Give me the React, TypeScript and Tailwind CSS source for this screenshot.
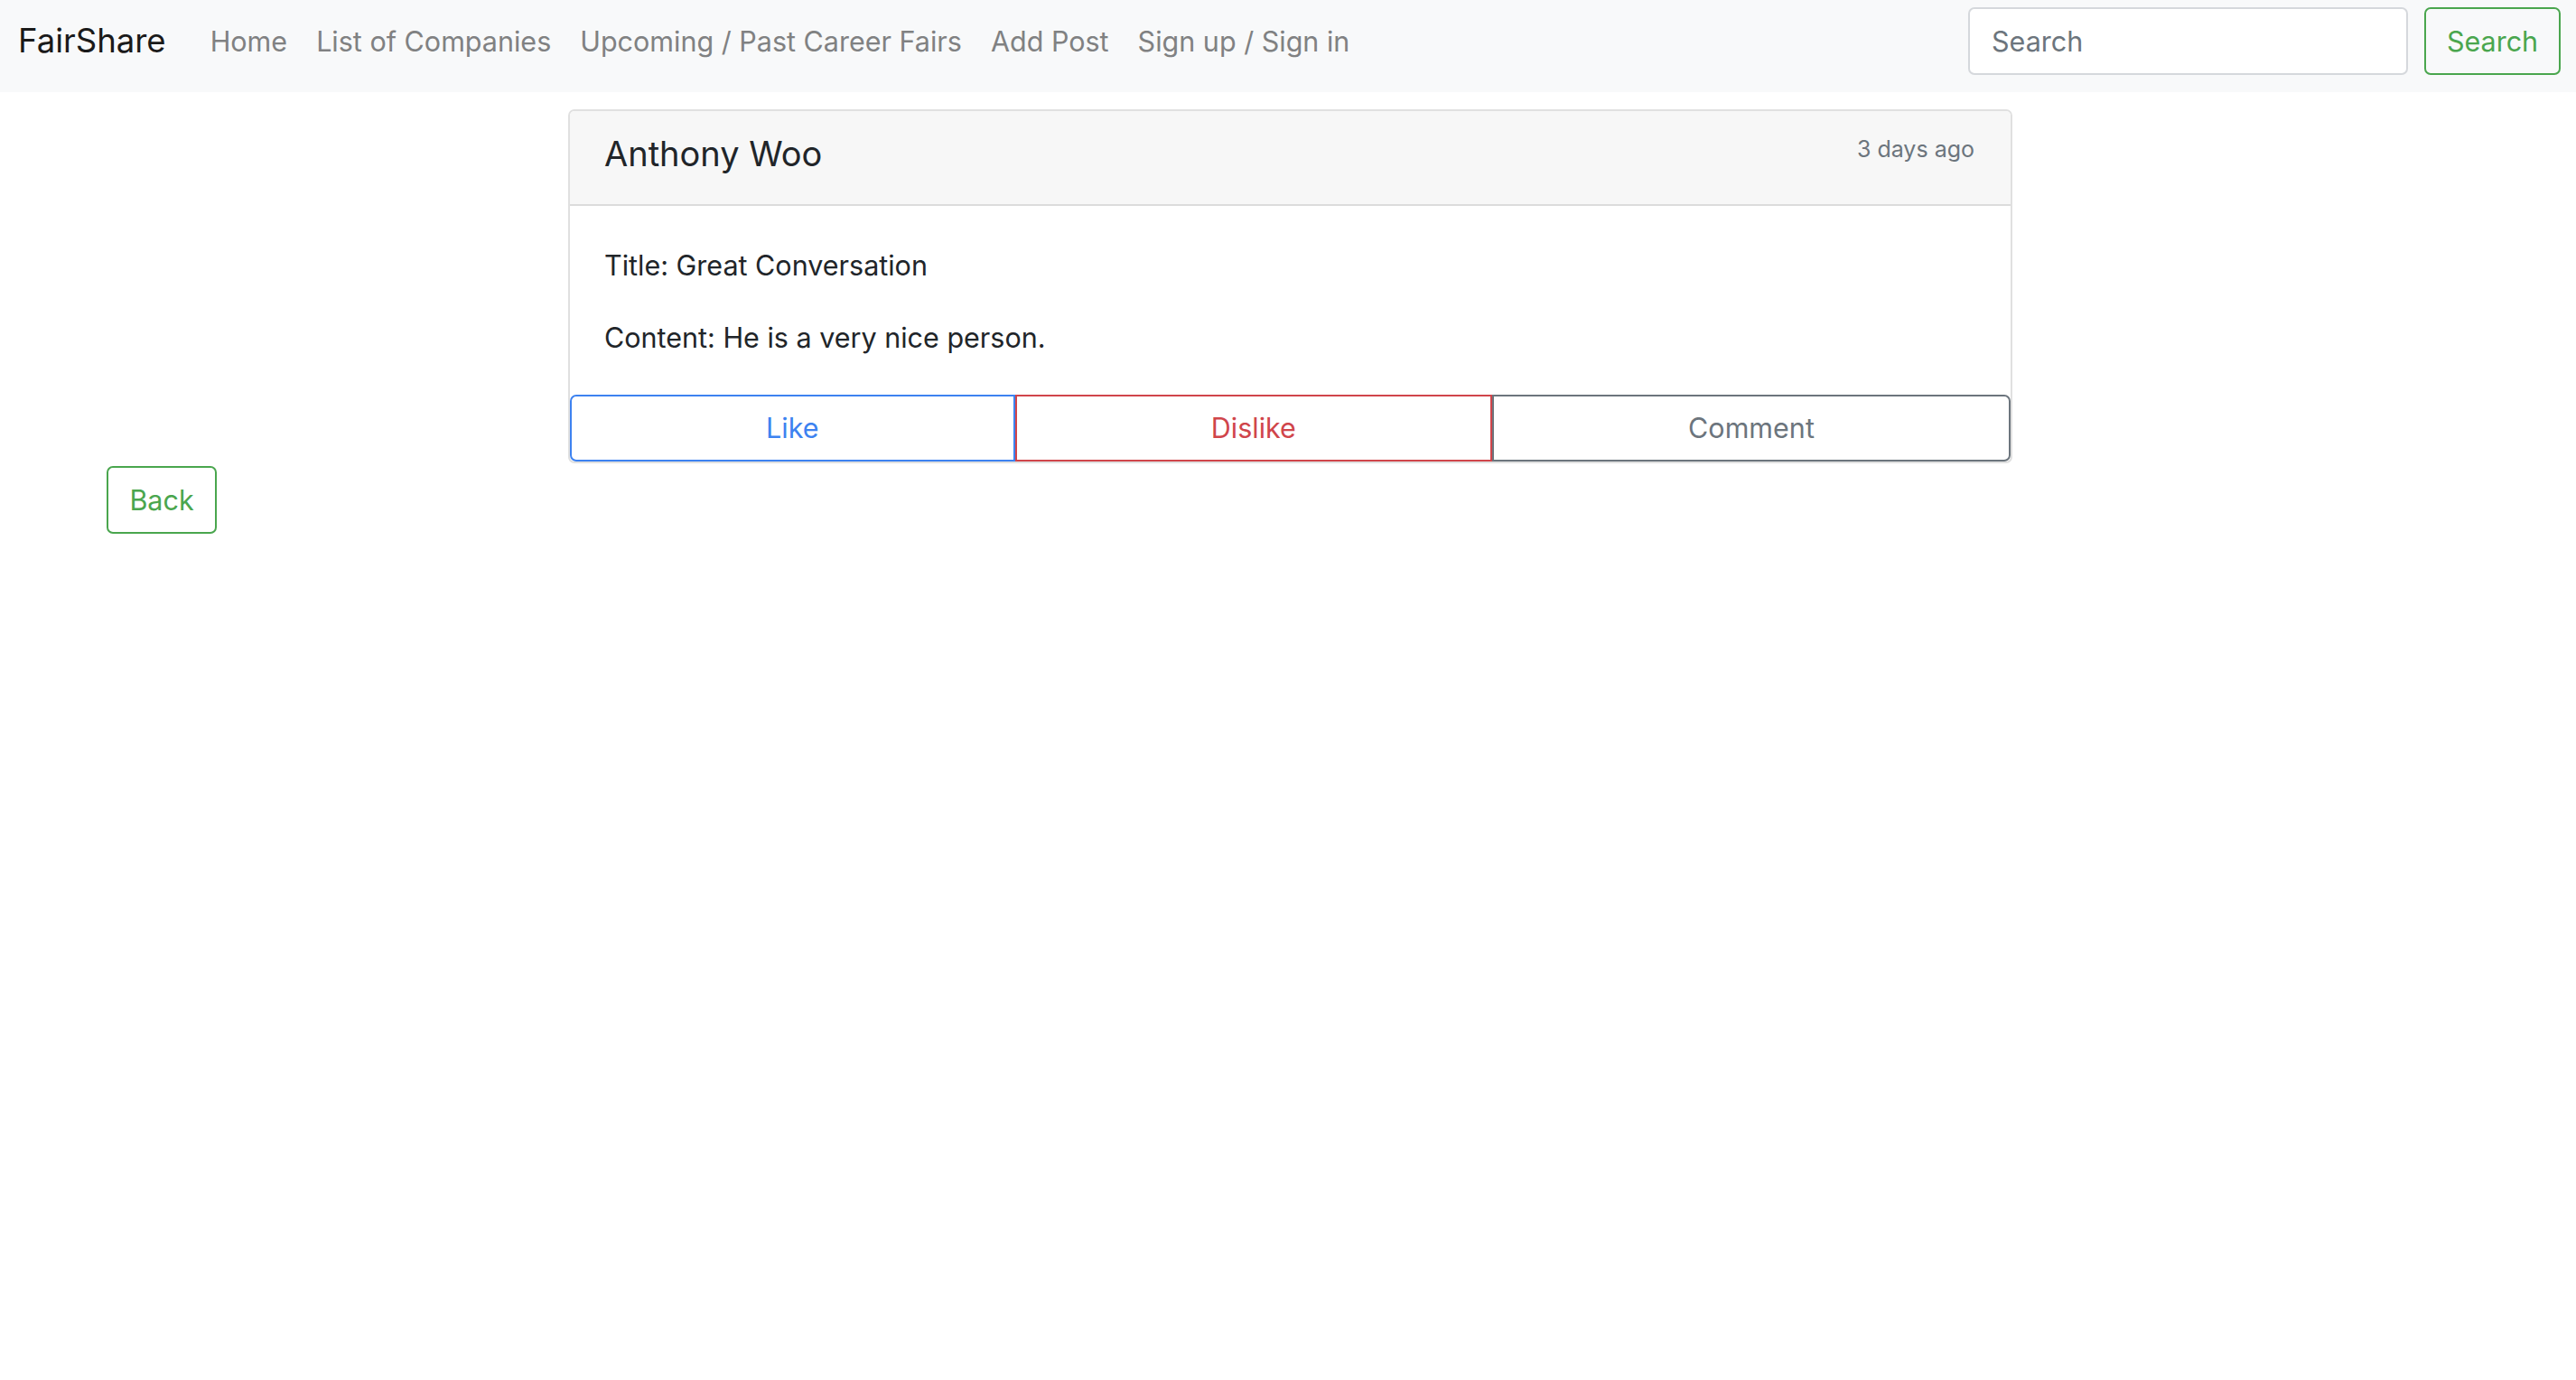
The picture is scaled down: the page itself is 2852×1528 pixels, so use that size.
import React from "react";

const links = ["Home", "List of Companies", "Upcoming / Past Career Fairs", "Add Post", "Sign up / Sign in"];

const App = () => {
  return (
    <div className="min-h-screen bg-white font-['Inter','Liberation_Sans',sans-serif] text-[#212529]">
      <nav className="h-[102px] bg-[#f8f9fa] flex items-start pt-[8px] pl-[20px] pr-[17px]">
        <span className="h-[75px] flex items-center text-[36.5px] text-[#1a1a1a] mr-[33px]">FairShare</span>
        {links.map((link, index) => (
          <a key={index} className="h-[75px] flex items-center text-[30.5px] text-[#808182] px-[16px]" href="#">
            {link}
          </a>
        ))}
        <input
          className="ml-auto w-[487px] h-[75px] bg-white border-2 border-[#d5d8dc] rounded-[7px] px-[24px] text-[30.5px] placeholder:text-[#6c757d] outline-none"
          placeholder="Search"
        />
        <button className="ml-[18px] w-[151px] h-[75px] border-2 border-[#4aa64e] rounded-[7px] text-[30.5px] text-[#4aa64e]">
          Search
        </button>
      </nav>

      <div className="mt-[19px] ml-[629px] w-[1599px] border-2 border-[#e0e0e0] rounded-[7px] overflow-hidden">
        <div className="h-[105px] bg-[#f7f7f7] border-b-2 border-[#dcdcdc] flex justify-between items-start pl-[38px] pr-[40px]">
          <h5 className="mt-[26px] text-[38px] leading-[43px] text-[#212529]">Anthony Woo</h5>
          <small className="mt-[24px] text-[25px] leading-[37px] text-[#6c757d]">3 days ago</small>
        </div>
        <div className="pt-[44px] pb-[41px] px-[38px] text-[30.5px] leading-[44px]">
          <p className="mb-[36px]">Title: Great Conversation</p>
          <p>Content: He is a very nice person.</p>
        </div>
        <div className="flex h-[74px]">
          <button className="flex-auto px-[22px] border-2 border-[#3d82f0] rounded-l-[7px] text-[30.5px] text-[#3d82f0]">
            Like
          </button>
          <button className="flex-auto px-[22px] border-2 border-[#d0454b] text-[30.5px] text-[#d0454b]">
            Dislike
          </button>
          <button className="flex-auto px-[22px] border-2 border-[#6c757d] rounded-r-[7px] text-[30.5px] text-[#6c757d]">
            Comment
          </button>
        </div>
      </div>

      <button className="mt-[3px] ml-[118px] w-[122px] h-[75px] border-2 border-[#4aa64e] rounded-[7px] text-[30.5px] text-[#4aa64e]">
        Back
      </button>
    </div>
  );
};

export default App;
